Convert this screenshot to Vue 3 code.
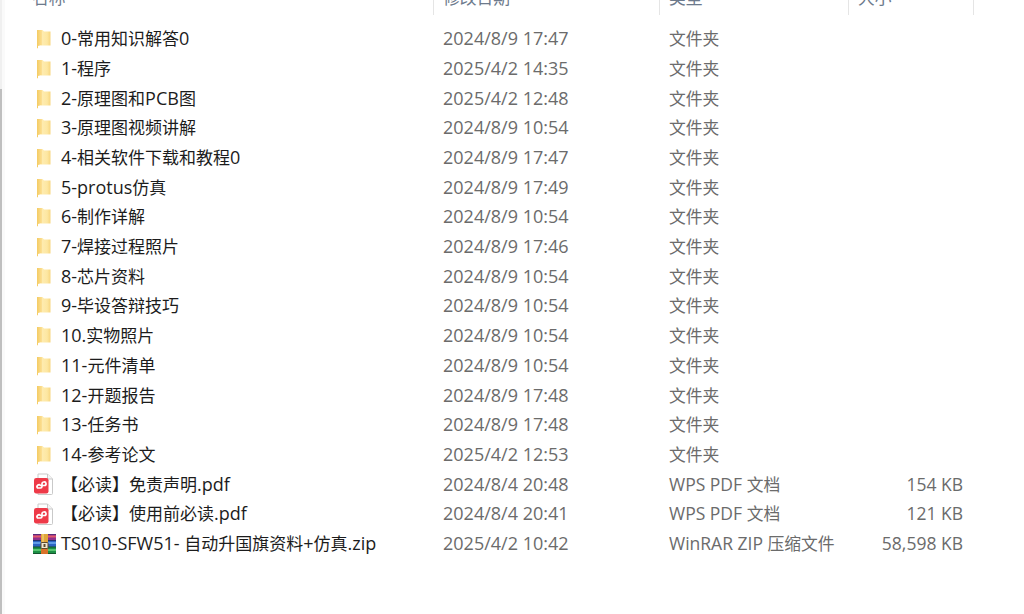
<template>
  <div class="window">
    <div class="rail">
      <div class="rail-top"></div>
      <div class="rail-thumb"></div>
    </div>
    <div class="explorer">
      <svg class="defs" width="0" height="0">
        <defs>
          <linearGradient id="foldBody" x1="0" y1="0" x2="1" y2="0">
            <stop offset="0" stop-color="#fff0bd" />
            <stop offset="0.75" stop-color="#fde7a2" />
            <stop offset="1" stop-color="#f7d67f" />
          </linearGradient>
          <linearGradient id="foldFlap" x1="0" y1="0" x2="1" y2="0">
            <stop offset="0" stop-color="#f4cb62" />
            <stop offset="1" stop-color="#fce096" />
          </linearGradient>
        </defs>
      </svg>
      <div class="header">
        <div class="col-name"><span class="head-text cjk">名称</span></div>
        <div class="col-date"><span class="head-text cjk">修改日期</span></div>
        <div class="col-type"><span class="head-text cjk">类型</span></div>
        <div class="col-size"><span class="head-text cjk">大小</span></div>
      </div>
      <div class="list">
        <div v-for="row in rows" :key="row.name" class="row">
          <div class="icon-cell">
            <svg v-if="row.kind === 'folder'" class="icon" width="24" height="20" viewBox="0 0 24 20">
              <path d="M4 1 H9.5 L11 2.5 H17.5 V16.5 H8 V1 Z" fill="url(#foldBody)" />
              <path d="M4 1 L9 1 V16 L5 17 V19.5 L4 19 Z" fill="url(#foldFlap)" />
            </svg>
            <svg v-else-if="row.kind === 'pdf'" class="icon" width="24" height="22" viewBox="0 0 24 22">
              <path d="M5 1 H14.5 L19.5 6 V20.5 Q19.5 21.5 18.5 21.5 H5 Z" fill="#fff" stroke="#c9c9c9" />
              <path d="M14.5 1 V6 H19.5" fill="#f4f4f4" stroke="#c9c9c9" />
              <rect x="1" y="5" width="14.5" height="15.5" rx="2.2" fill="#ee3a48" />
              <path d="M4.5 15 H7.5 A1.6 1.6 0 0 0 9 13.5 V10.5 A1.6 1.6 0 0 1 10.5 9 H11 A1.6 1.6 0 0 1 11.5 12.5 H7.5 A1.6 1.6 0 0 0 4.5 15 Z" fill="none" stroke="#fff" stroke-width="1.7" />
            </svg>
            <svg v-else class="icon" width="24" height="20" viewBox="0 0 24 20">
              <rect x="0" y="0" width="23" height="6.5" fill="#8f2f8c" />
              <rect x="0" y="1.5" width="23" height="2" fill="#e2596a" />
              <rect x="0" y="6.5" width="23" height="6.5" fill="#2c63c2" />
              <rect x="0" y="8" width="23" height="2" fill="#5f9be6" />
              <rect x="0" y="13" width="23" height="7" fill="#1d8f45" />
              <rect x="0" y="15" width="23" height="2" fill="#56c46e" />
              <rect x="0" y="0" width="23" height="1" fill="#5a2a78" />
              <rect x="0" y="6" width="23" height="1" fill="#23356e" />
              <rect x="0" y="12.5" width="23" height="1" fill="#14552c" />
              <rect x="0" y="19" width="23" height="1" fill="#14552c" />
              <rect x="8" y="0" width="7" height="20" fill="#e0a63a" />
              <rect x="8" y="13" width="7" height="7" fill="#d9722a" />
              <rect x="9.5" y="0" width="1" height="9" fill="#f6dc8a" />
              <rect x="8" y="8.5" width="7" height="6" rx="0.5" fill="#efe7cf" stroke="#5c4a2c" />
              <rect x="10.5" y="10" width="2" height="3" fill="#5c4a2c" />
            </svg>
          </div>
          <div class="cell-name">
            <span v-for="(r, i) in runs(row.name)" :key="i" :class="r.cls">{{ r.text }}</span>
          </div>
          <div class="cell-date">{{ row.date }}</div>
          <div class="cell-type">
            <span v-for="(r, i) in runs(row.type)" :key="i" :class="r.cls">{{ r.text }}</span>
          </div>
          <div class="cell-size">{{ row.size }}</div>
        </div>
      </div>
    </div>
  </div>
</template>

<script setup>
const folder = (name, date) => ({ kind: 'folder', name, date, type: '文件夹', size: '' })

const rows = [
  folder('0-常用知识解答0', '2024/8/9 17:47'),
  folder('1-程序', '2025/4/2 14:35'),
  folder('2-原理图和PCB图', '2025/4/2 12:48'),
  folder('3-原理图视频讲解', '2024/8/9 10:54'),
  folder('4-相关软件下载和教程0', '2024/8/9 17:47'),
  folder('5-protus仿真', '2024/8/9 17:49'),
  folder('6-制作详解', '2024/8/9 10:54'),
  folder('7-焊接过程照片', '2024/8/9 17:46'),
  folder('8-芯片资料', '2024/8/9 10:54'),
  folder('9-毕设答辩技巧', '2024/8/9 10:54'),
  folder('10.实物照片', '2024/8/9 10:54'),
  folder('11-元件清单', '2024/8/9 10:54'),
  folder('12-开题报告', '2024/8/9 17:48'),
  folder('13-任务书', '2024/8/9 17:48'),
  folder('14-参考论文', '2025/4/2 12:53'),
  { kind: 'pdf', name: '【必读】免责声明.pdf', date: '2024/8/4 20:48', type: 'WPS PDF 文档', size: '154 KB' },
  { kind: 'pdf', name: '【必读】使用前必读.pdf', date: '2024/8/4 20:41', type: 'WPS PDF 文档', size: '121 KB' },
  { kind: 'rar', name: 'TS010-SFW51- 自动升国旗资料+仿真.zip', date: '2025/4/2 10:42', type: 'WinRAR ZIP 压缩文件', size: '58,598 KB' }
]

// latin and cjk glyphs have different scale in the original, so split them
const runs = (text) =>
  text.match(/[\u3000-\u9fff\uff00-\uffef]+|[^\u3000-\u9fff\uff00-\uffef]+/g).map((t) => ({
    text: t,
    cls: /[\u3000-\u9fff\uff00-\uffef]/.test(t) ? 'cjk' : ''
  }))
</script>

<style>
html, body {
  background: #fff;
  overflow: hidden;
}
</style>

<style scoped>
.window {
  display: flex;
  width: 1024px;
  height: 614px;
  background: #fff;
  overflow: hidden;
}

.rail {
  width: 2px;
  flex: none;
  display: flex;
  flex-direction: column;
  border-right: 3px solid #fafafa;
}

.rail-top {
  height: 89px;
  background: #f0f0f0;
}

.rail-thumb {
  flex: 1;
  background: #bfbfbf;
}

.explorer {
  flex: 1;
  margin-left: -2px;
  font-family: "Open Sans", "Noto Sans CJK SC", sans-serif;
  font-size: 18px;
  overflow: hidden;
}

.defs {
  display: block;
}

.cjk {
  font-size: 16.8px;
}

.header {
  display: flex;
  height: 15px;
  overflow: hidden;
  color: #6d7a8c;
}

.header > div {
  box-sizing: border-box;
  border-right: 1px solid #e5e5e5;
  padding-left: 9px;
  height: 15px;
}

.head-text {
  display: block;
  line-height: 22px;
  margin-top: -13px;
}

.header .col-name {
  width: 431px;
  padding-left: 29px;
}

.header .col-date {
  width: 226px;
}

.header .col-type {
  width: 189px;
}

.header .col-size {
  width: 125px;
}

.list {
  padding-top: 9.3px;
}

.row {
  display: flex;
  align-items: center;
  height: 29.7px;
  line-height: 29.7px;
  white-space: nowrap;
}

.icon-cell {
  width: 58px;
  padding-left: 30px;
  box-sizing: border-box;
  display: flex;
  align-items: center;
  flex: none;
}

.icon {
  display: block;
  flex: none;
}

.cell-name {
  width: 382px;
  color: #1c1c1c;
  flex: none;
}

.cell-name .cjk {
  font-size: 17px;
}

.cell-date {
  width: 226px;
  color: #6b6b6b;
  flex: none;
}

.cell-type {
  width: 195px;
  color: #6b6b6b;
  font-size: 17.5px;
  flex: none;
}

.cell-size {
  width: 99px;
  text-align: right;
  color: #6b6b6b;
  font-size: 17.5px;
  flex: none;
}
</style>
